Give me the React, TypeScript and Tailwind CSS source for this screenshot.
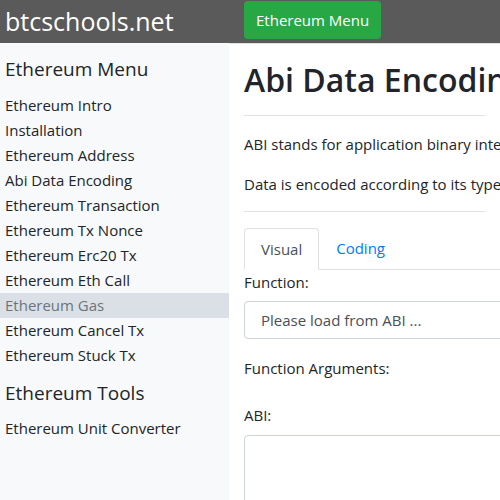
const menu = [
  "Ethereum Intro",
  "Installation",
  "Ethereum Address",
  "Abi Data Encoding",
  "Ethereum Transaction",
  "Ethereum Tx Nonce",
  "Ethereum Erc20 Tx",
  "Ethereum Eth Call",
  "Ethereum Gas",
  "Ethereum Cancel Tx",
  "Ethereum Stuck Tx",
];

export default function App() {
  return (
    <div className="h-[500px] w-[500px] overflow-hidden bg-white font-['Open_Sans',sans-serif] text-[#212529]">
      <header className="flex h-[43px] items-center bg-[#5a5a5a]">
        <div className="w-[244px] pl-[5px] text-[25px] leading-none text-white">btcschools.net</div>
        <button className="h-[38px] -mt-[3px] rounded-[4px] bg-[#28a745] px-[12px] text-[15px] text-white">
          Ethereum Menu
        </button>
      </header>
      <div className="flex h-[457px]">
        <aside className="w-[229px] shrink-0 bg-[#f8f9fa] pt-[14px]">
          <h5 className="pl-[5px] text-[19px] leading-[24px]">Ethereum Menu</h5>
          <ul className="mt-[12px]">
            {menu.map((m) => (
              <li
                key={m}
                className={
                  "h-[25px] pl-[5px] text-[15px] leading-[25px] " +
                  (m === "Ethereum Gas" ? "bg-[#dae0e5] text-[#6c757d]" : "")
                }
              >
                {m}
              </li>
            ))}
          </ul>
          <h5 className="mt-[13px] pl-[5px] text-[19px] leading-[24px]">Ethereum Tools</h5>
          <ul className="mt-[11px]">
            <li className="h-[25px] pl-[5px] text-[15px] leading-[25px]">Ethereum Unit Converter</li>
          </ul>
        </aside>
        <main className="min-w-0 flex-1 overflow-hidden border-t border-[#dee2e6] px-[15px]">
          <h1 className="mt-[17px] whitespace-nowrap text-[32px] font-semibold leading-[38px]">
            Abi Data Encoding
          </h1>
          <hr className="mt-[16px] border-[#dee2e6]" />
          <p className="mt-[16px] whitespace-nowrap text-[15px] leading-[24px]">
            ABI stands for application binary interface, which defines how data is encoded.
          </p>
          <p className="mt-[16px] whitespace-nowrap text-[15px] leading-[24px]">
            Data is encoded according to its type, as described in the specification.
          </p>
          <hr className="mt-[15px] border-[#dee2e6]" />
          <div className="mt-[16px] flex w-[600px] border-b border-[#dee2e6]">
            <div className="-mb-px h-[42px] rounded-t-[4px] border border-[#dee2e6] border-b-white bg-white px-[16px] text-[15px] leading-[40px] text-[#495057]">
              Visual
            </div>
            <div className="h-[41px] px-[17px] text-[15px] leading-[40px] text-[#007bff]">Coding</div>
          </div>
          <div className="text-[15px] leading-[24px]">Function:</div>
          <div className="mt-[7px] h-[38px] w-[600px] rounded-[4px] border border-[#ced4da] px-[16px] text-[15px] leading-[36px] text-[#495057]">
            Please load from ABI ...
          </div>
          <div className="mt-[17px] text-[15px] leading-[24px]">Function Arguments:</div>
          <div className="mt-[23px] text-[15px] leading-[24px]">ABI:</div>
          <div className="mt-[8px] h-[100px] w-[600px] rounded-[4px] border border-[#ced4da]" />
        </main>
      </div>
    </div>
  );
}
